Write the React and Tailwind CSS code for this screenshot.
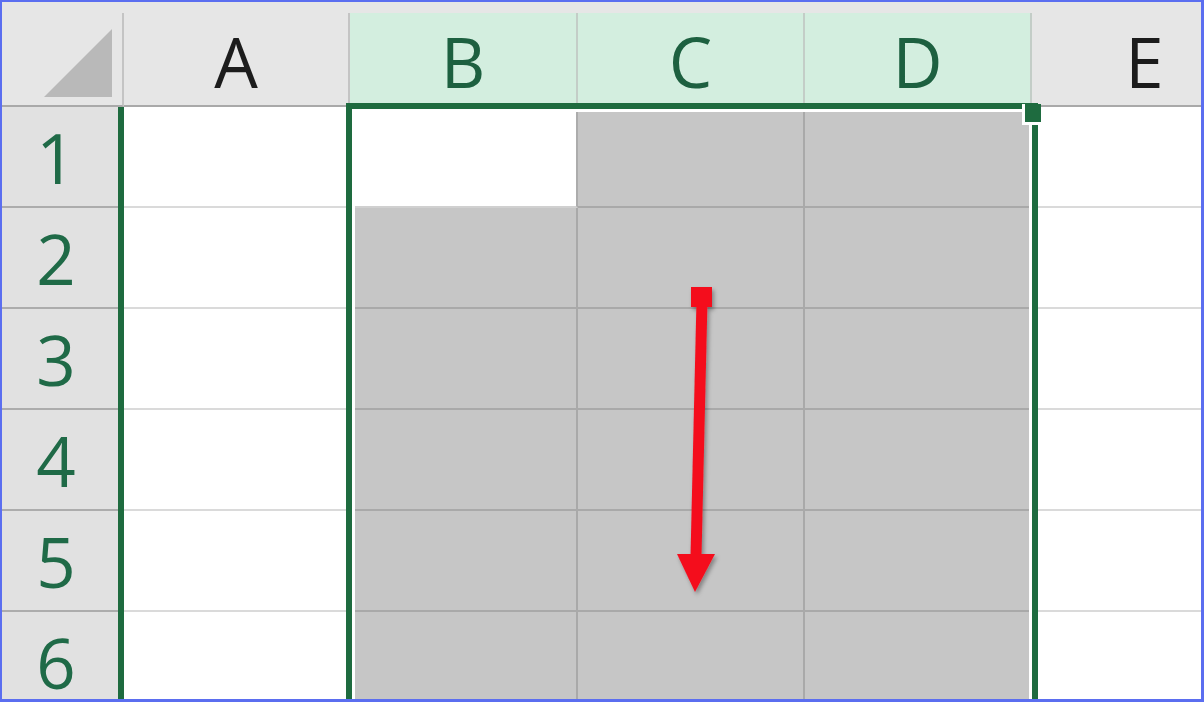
const GREEN = 'border-[#1e6b3f]'

const COLUMNS = [
  { label: 'A', width: 'w-[226px]', selected: false },
  { label: 'B', width: 'w-[228px]', selected: true },
  { label: 'C', width: 'w-[227px]', selected: true },
  { label: 'D', width: 'w-[227px]', selected: true },
  { label: 'E', width: 'w-[227px]', selected: false },
]

const ROWS = [1, 2, 3, 4, 5, 6]

function cellClass(col, row) {
  if (col === 0 || col === 4) return 'bg-white border-b-2 border-r-2 border-[#dadada]'
  if (col === 1 && row === 1) return 'bg-white border-b-2 border-b-[#d0d0d0] border-r-2 border-r-[#acacac]'
  return 'bg-[#c6c6c6] border-b-2 border-r-2 border-[#a9a9a9]'
}

export default function App() {
  return (
    <div className="relative w-[1204px] h-[702px] overflow-hidden border-t-2 border-l-2 border-r-[3px] border-b-[3px] border-[#5b6ef0] bg-[#e6e6e6] font-['Open_Sans',sans-serif]">
      {/* column headers */}
      <div className="flex h-[105px] pt-[11px] bg-[#e6e6e6]">
        <div className="w-[122px] shrink-0 flex items-end justify-end pr-[10px] pb-[8px] border-r-2 border-r-[#c4c4c4] border-b-2 border-b-[#a9a9a9]">
          <svg width="68" height="68" viewBox="0 0 68 68">
            <polygon points="68,0 68,68 0,68" fill="#b9b9b9" />
          </svg>
        </div>
        {COLUMNS.map(c => (
          <div
            key={c.label}
            className={`${c.width} shrink-0 flex items-center justify-center pt-[4px] text-[69px] leading-none border-r-2 border-b-2 ${
              c.selected
                ? 'bg-[#d3eedf] text-[#1d6040] border-r-[#c3cdc7] border-b-[#1e6b3f]'
                : 'bg-[#e6e6e6] text-[#1c1c1c] border-r-[#c4c4c4] border-b-[#a9a9a9]'
            }`}
          >
            {c.label}
          </div>
        ))}
      </div>

      {/* rows */}
      <div className="flex">
        <div className={`w-[122px] shrink-0 border-r-[6px] ${GREEN} bg-[#e1e1e1]`}>
          {ROWS.map(r => (
            <div
              key={r}
              className="h-[101px] flex items-start justify-center pr-[8px] pt-[16px] text-[69px] leading-none text-[#1f6a47] border-b-2 border-[#acacac]"
            >
              {r}
            </div>
          ))}
        </div>
        <div className="shrink-0 grid grid-cols-[226px_228px_227px_227px_227px] auto-rows-[101px]">
          {ROWS.map(r =>
            COLUMNS.map((c, i) => <div key={`${c.label}${r}`} className={cellClass(i, r)} />)
          )}
        </div>
      </div>

      {/* selection outline B1:D6 */}
      <div className={`absolute left-[344px] top-[101px] w-[692px] h-[700px] border-[6px] ${GREEN}`}>
        <div className="absolute inset-0 border-[3px] border-white" />
      </div>
      {/* fill handle */}
      <div className="absolute left-[1020px] top-[102px] w-[19px] h-[21px] bg-[#1e6b3f] border-l-[3px] border-b-[3px] border-white" />

      {/* drag arrow */}
      <svg className="absolute left-[668px] top-[278px]" width="60" height="330" viewBox="0 0 60 330">
        <defs>
          <filter id="arrowShadow" x="-50%" y="-10%" width="200%" height="130%">
            <feDropShadow dx="2" dy="3" stdDeviation="2" floodColor="#000" floodOpacity="0.35" />
          </filter>
        </defs>
        <g filter="url(#arrowShadow)" fill="#f4111f">
          <rect x="21" y="7" width="21" height="20" />
          <polygon points="26.5,20 37.5,20 31.5,276 20.5,276" />
          <polygon points="7,274 45,274 25,312" />
        </g>
      </svg>
    </div>
  )
}
